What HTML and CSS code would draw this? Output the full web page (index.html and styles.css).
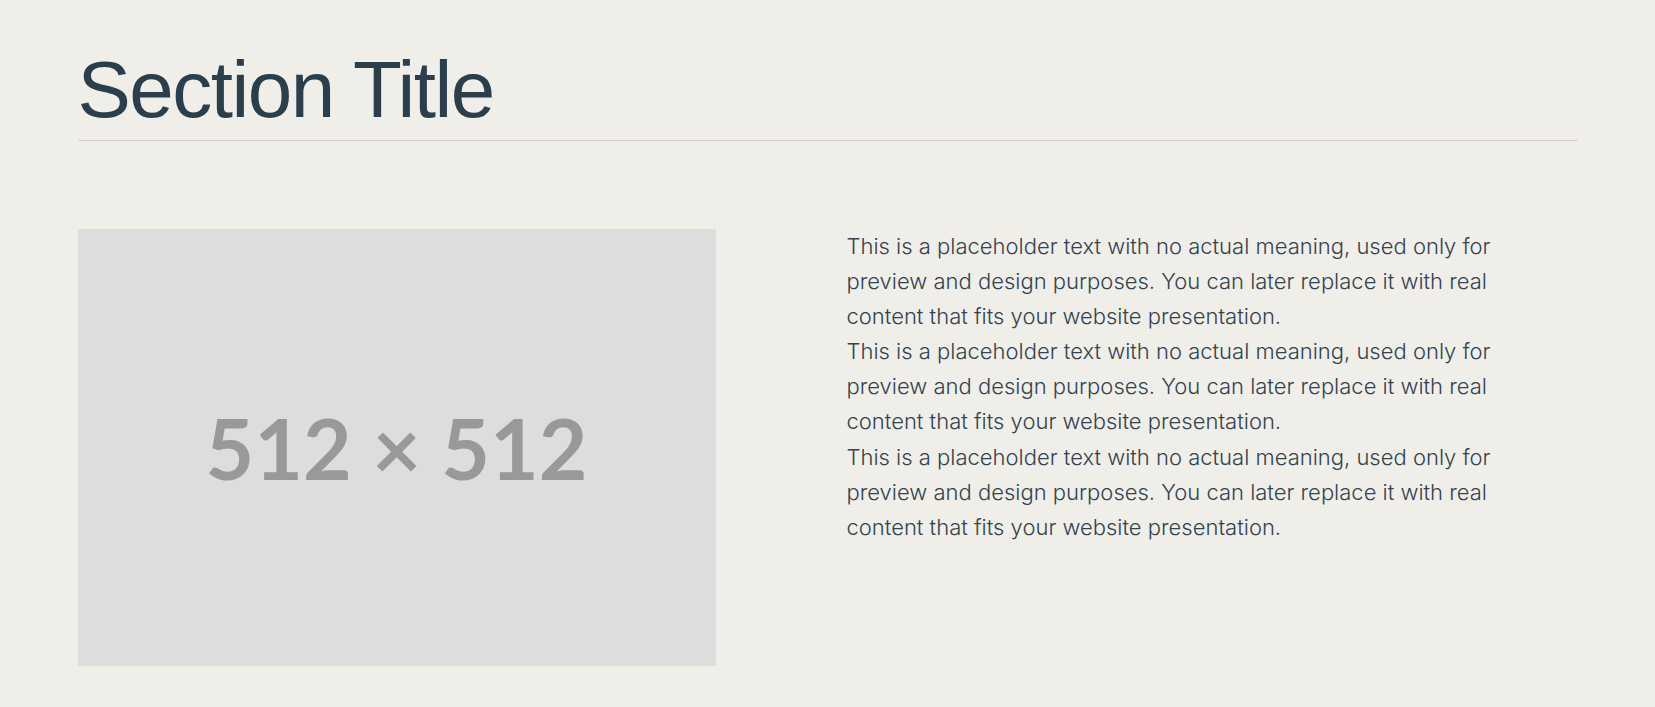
FILE: index.html
```html
<!DOCTYPE html>
<html lang="en">
<head>
<meta charset="utf-8">
<title>Section</title>
<link rel="stylesheet" href="styles.css">
</head>
<body>
<section class="section">
  <h1 class="section-title">Section Title</h1>
  <div class="content">
    <div class="placeholder"><span class="placeholder-label">512 × 512</span></div>
    <div class="text">
      <p>This is a placeholder text with no actual meaning, used only for preview and design purposes. You can later replace it with real content that fits your website presentation.</p>
      <p>This is a placeholder text with no actual meaning, used only for preview and design purposes. You can later replace it with real content that fits your website presentation.</p>
      <p>This is a placeholder text with no actual meaning, used only for preview and design purposes. You can later replace it with real content that fits your website presentation.</p>
    </div>
  </div>
</section>
</body>
</html>
```

FILE: styles.css
```css
html, body {
  margin: 0;
  padding: 0;
}
body {
  background: #f0eee9;
  font-family: Inter, "Liberation Sans", sans-serif;
}
.section {
  max-width: 1500px;
  margin: 0 auto;
  padding-top: 40px;
}
.section-title {
  margin: 0;
  font-family: "Liberation Sans", Arial, sans-serif;
  font-weight: 400;
  font-size: 80px;
  line-height: 100px;
  letter-spacing: -1.5px;
  color: #2b3e4c;
  border-bottom: 1px solid #d6d3ce;
}
.content {
  display: grid;
  grid-template-columns: 638px 690px;
  column-gap: 131px;
  align-items: start;
  margin-top: 88px;
}
.placeholder {
  height: 437px;
  background: #dddddd;
  display: flex;
  align-items: center;
  justify-content: center;
}
.placeholder-label {
  font-family: Lato, sans-serif;
  font-weight: 700;
  font-size: 84px;
  color: #999999;
}
.text p {
  margin: 0;
  font-size: 22px;
  line-height: 35.1px;
  font-weight: 300;
  color: #33434f;
}
```
